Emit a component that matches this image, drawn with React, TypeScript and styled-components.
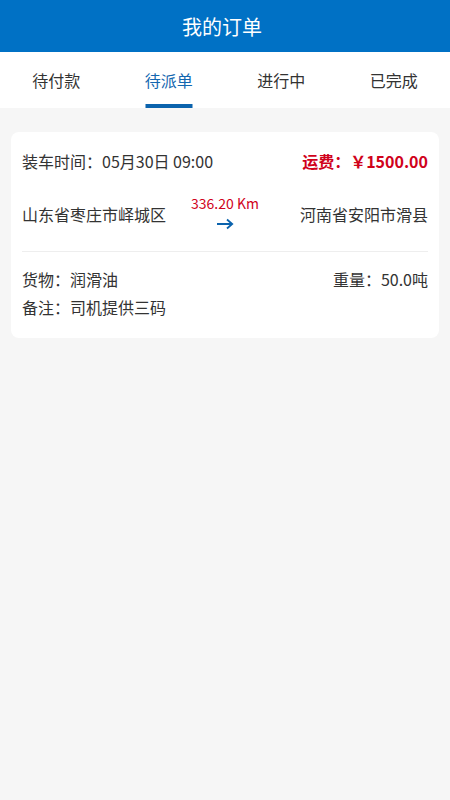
import React from "react";
import styled, { createGlobalStyle } from "styled-components";

const Global = createGlobalStyle`
  html, body { margin: 0; padding: 0; background: #f6f6f6; }
  body { font-family: "Noto Sans CJK SC", "Noto Sans", sans-serif; }
  * { box-sizing: border-box; }
`;

const Page = styled.div`
  width: 450px;
  min-height: 800px;
  background: #f6f6f6;
`;

const Header = styled.header`
  height: 52px;
  background: #0071c5;
  color: #fff;
  display: flex;
  align-items: center;
  justify-content: center;
  font-size: 20px;
  padding-right: 6px;
`;

const Tabs = styled.nav`
  height: 56px;
  background: #fff;
  display: grid;
  grid-template-columns: repeat(4, 1fr);
`;

const Tab = styled.div<{ $active?: boolean }>`
  position: relative;
  display: flex;
  align-items: center;
  justify-content: center;
  font-size: 16px;
  color: ${(p) => (p.$active ? "#1467b0" : "#333")};
  &::after {
    content: "";
    display: ${(p) => (p.$active ? "block" : "none")};
    position: absolute;
    bottom: 0;
    left: 50%;
    transform: translateX(-50%);
    width: 47px;
    height: 4px;
    background: #0b63ad;
  }
`;

const List = styled.main`
  padding: 24px 11px;
`;

const Card = styled.section`
  background: #fff;
  border-radius: 8px;
  padding: 16px 11px 18px;
  color: #333;
  font-size: 16px;
`;

const Row = styled.div`
  display: flex;
  justify-content: space-between;
  align-items: center;
  line-height: 26px;
`;

const Price = styled.span`
  color: #d0021b;
  font-weight: bold;
`;

const Route = styled.div`
  display: grid;
  grid-template-columns: 1fr auto 1fr;
  align-items: center;
  margin-top: 20px;
  padding-bottom: 21px;
  border-bottom: 1px solid #eee;
`;

const Place = styled.span<{ $end?: boolean }>`
  text-align: ${(p) => (p.$end ? "right" : "left")};
  margin-top: 4px;
`;

const Distance = styled.div`
  display: flex;
  flex-direction: column;
  align-items: center;
  color: #d0021b;
  font-size: 14px;
  line-height: 18px;
`;

const Arrow = styled.svg`
  margin-top: 6px;
  display: block;
`;

const Details = styled.div`
  margin-top: 14px;
  display: flex;
  flex-direction: column;
  gap: 2px;
`;

export default function App() {
  return (
    <Page>
      <Global />
      <Header>我的订单</Header>
      <Tabs>
        <Tab>待付款</Tab>
        <Tab $active>待派单</Tab>
        <Tab>进行中</Tab>
        <Tab>已完成</Tab>
      </Tabs>
      <List>
        <Card>
          <Row>
            <span>装车时间：05月30日 09:00</span>
            <Price>运费：￥1500.00</Price>
          </Row>
          <Route>
            <Place>山东省枣庄市峄城区</Place>
            <Distance>
              <span>336.20 Km</span>
              <Arrow width="18" height="12" viewBox="0 0 18 12">
                <path d="M1 6 H16 M11 1.5 L16.2 6 L11 10.5" stroke="#0b63ad" strokeWidth="1.8" fill="none" />
              </Arrow>
            </Distance>
            <Place $end>河南省安阳市滑县</Place>
          </Route>
          <Details>
            <Row>
              <span>货物：润滑油</span>
              <span>重量：50.0吨</span>
            </Row>
            <Row>
              <span>备注：司机提供三码</span>
            </Row>
          </Details>
        </Card>
      </List>
    </Page>
  );
}
